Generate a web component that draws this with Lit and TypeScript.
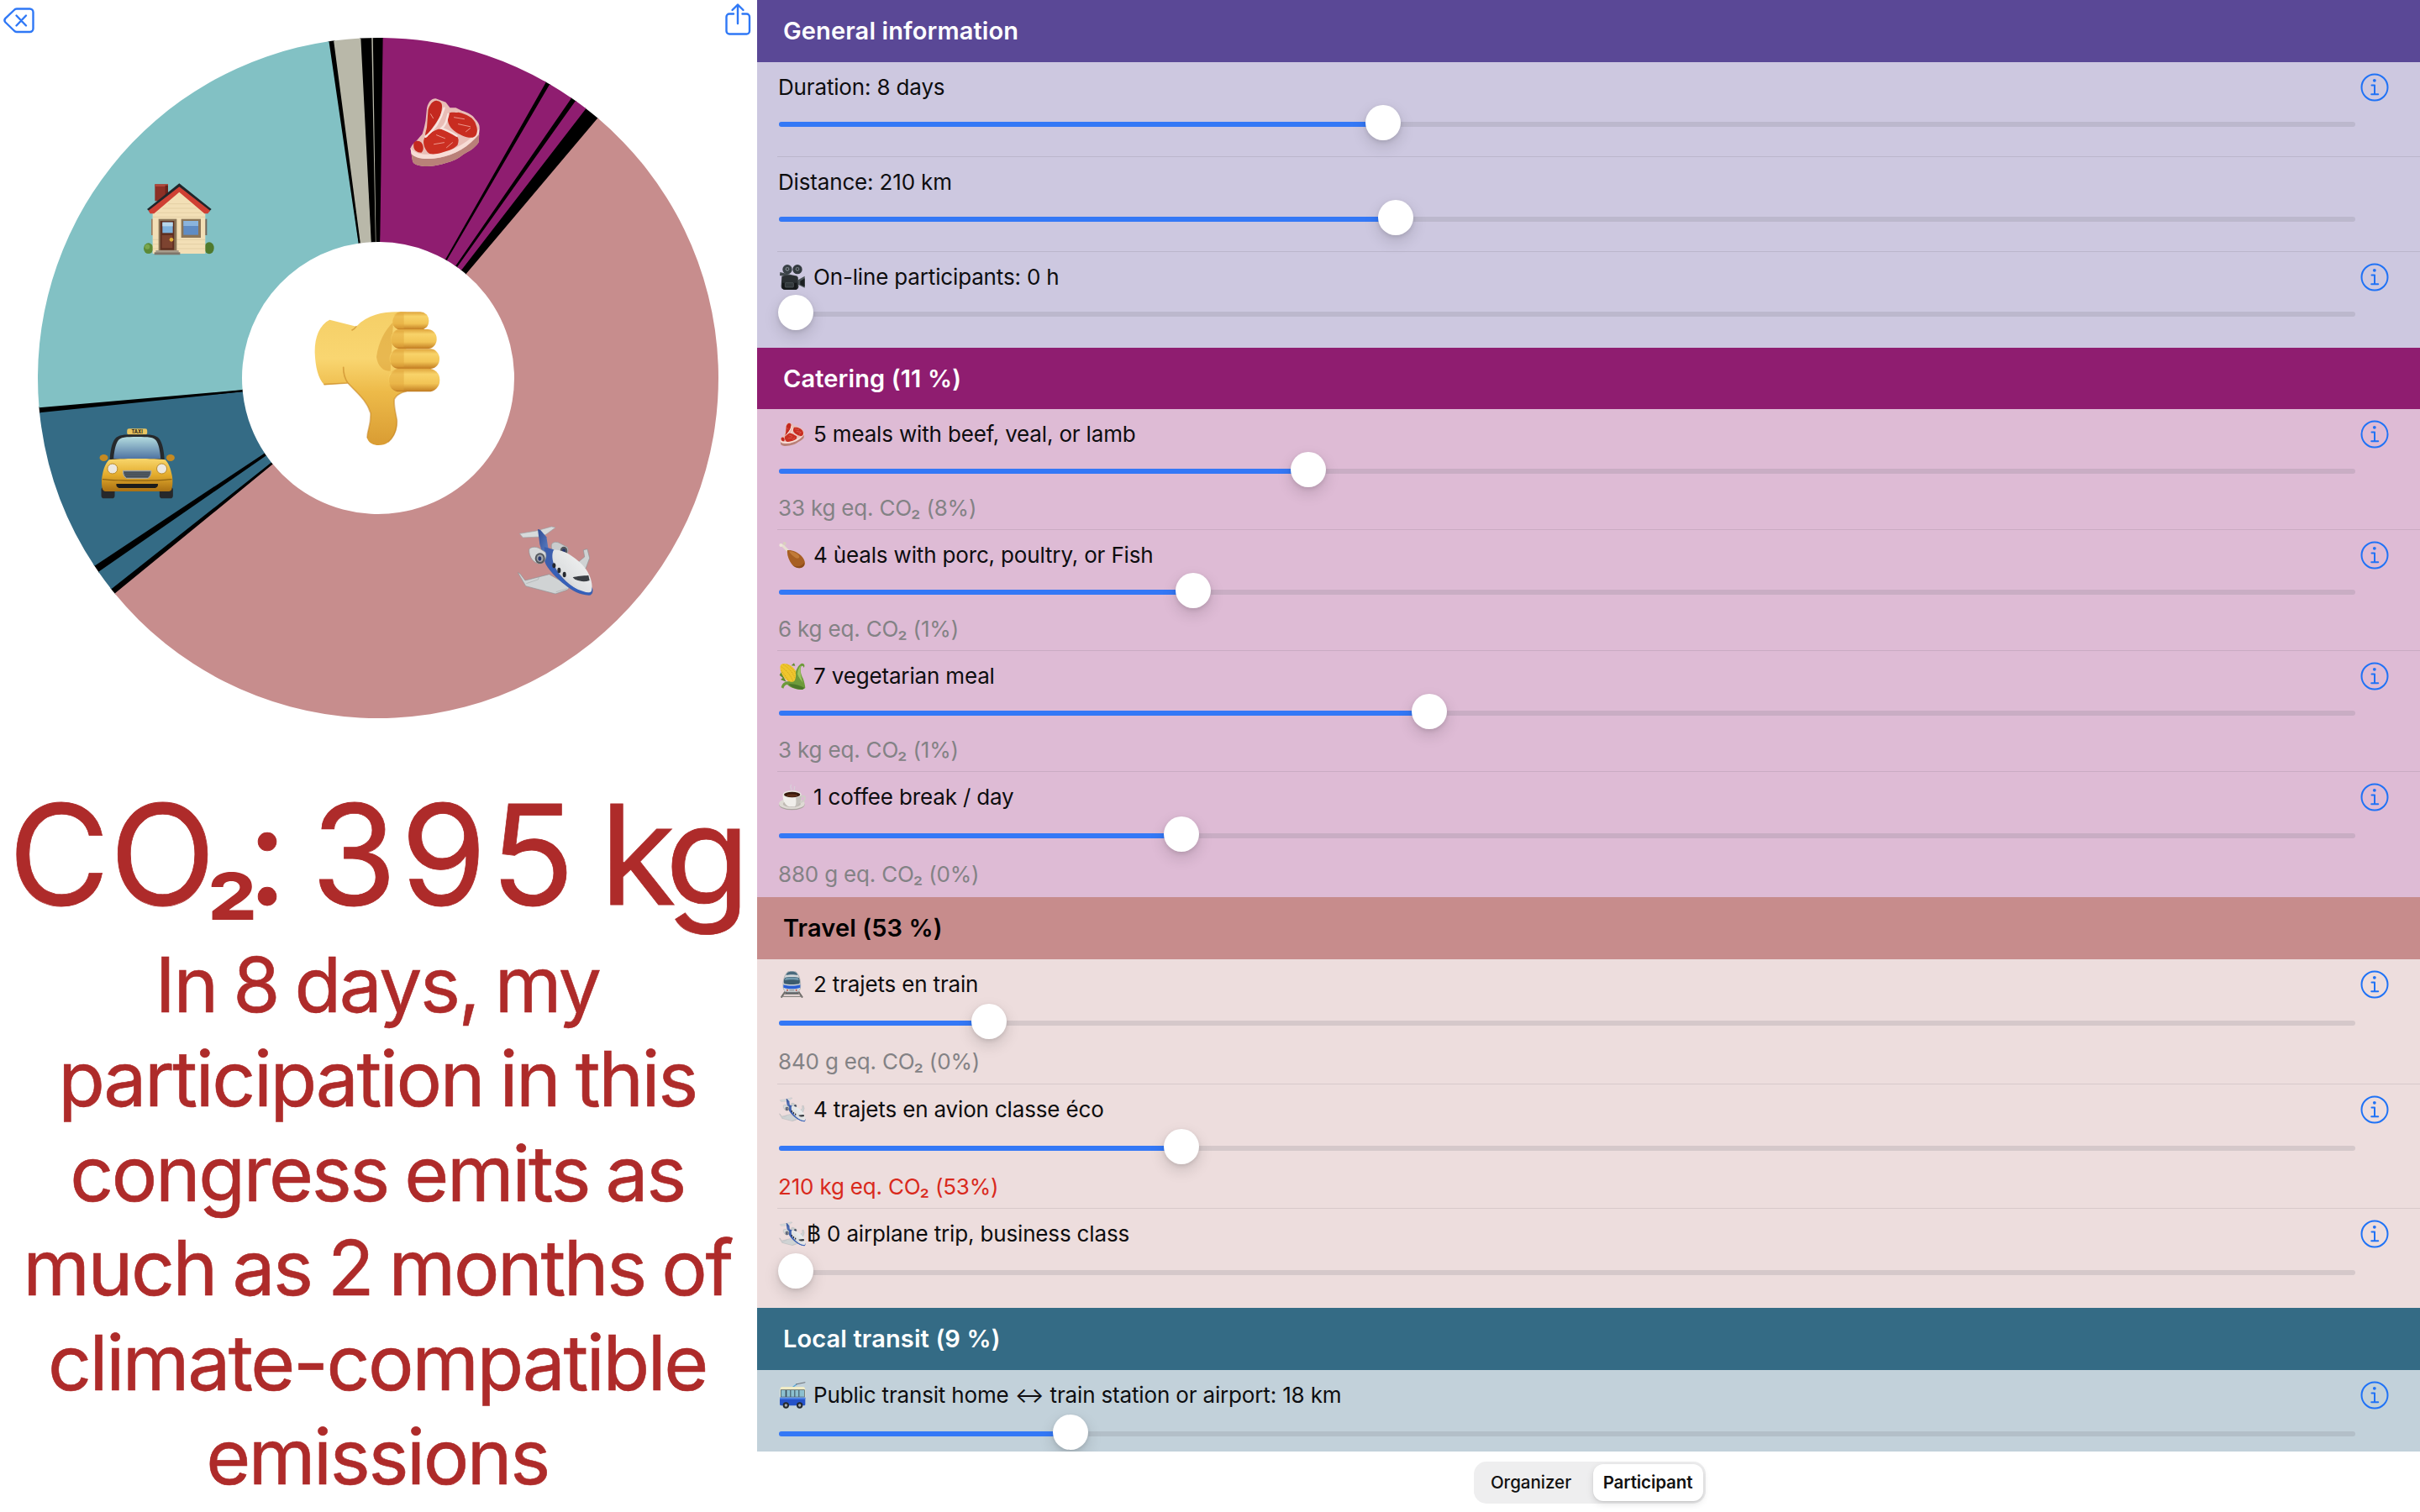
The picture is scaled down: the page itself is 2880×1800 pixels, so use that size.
import { LitElement, html, svg, css, nothing, type SVGTemplateResult } from "lit";
import { customElement, property } from "lit/decorators.js";
import { classMap } from "lit/directives/class-map.js";
import { styleMap } from "lit/directives/style-map.js";

/* ---------- Pictograms. Each one is drawn in its own coordinate box. ---------- */

const steak = svg`
  <path fill="#e9bdb6" d="M30 .6 42 5l5 6.600h7l7 3.400c7 2 13 5 16 10 4 4 6 8 5 12l-1 16c-5 7-11 10-18 14-7 6-13 8-20 10-9 3-19 5-29 4-7-1-11-3-11.500-6L0 60c1-3 3-6 6-8 3-3 5-6 8-9 2-6 3-11 4-16l1.500-15C21 5 25 .5 30 .6Z"/>
  <path fill="#b98078" d="M1 66c6 6 20 8 34 5 20-5 34-13 47-28l-1 10c-5 7-11 10-18 14-7 6-13 8-20 10-9 3-19 5-29 4-7-1-11-3-11.500-6Z"/>
  <path fill="#f7dcd6" d="M0 59c4 7 16 10 32 7 21-4 39-14 50-30l-.5 6C70 58 52 68 34 71 18 74 5 72 1 66Z"/>
  <path fill="#c4291f" d="M31 3c5 1 7 3 6.500 8-.5 9-4 14-8 20l-11 15c-2-2 0-6 1-11L21 14c2-6 5-11 10-11Z"/>
  <path fill="#c82c20" d="M46 18c3-2 7 0 11-1 9 2 19 6 21 15 3 7 1 14-4 15-7 1-15-3-22-8-6-5-10-12-6-21Z"/>
  <path fill="#cb2f22" d="M17 47c4-4 10-8 16-10 8 0 13 2 18 6 7 3 7 7 5 13-6 6-13 7-19 9-7 2-14 3-17-1-4-5-6-12-3-17Z"/>
  <path fill="#c4291f" d="M4 53c3-3 7-2 9 0 3 4 3 9 0 12-5 0-11-3-9-12Z"/>
  <path fill="none" stroke="#f9e4df" stroke-width="2.400" stroke-linecap="round" d="M40 12C36 26 30 37 18 46M45 19c-2 8-3 13-8 17 8 3 13 6 18 9"/>
  <path fill="none" stroke="#f0a59a" stroke-width=".9" stroke-linecap="round" d="M24 19l3 5M52 23l12 2M57 31l14 3M66 40l5-4M31 44l10 4M28 55l12-2M43 59l7-6"/>`;

const house = svg`
  <ellipse cx="80" cy="287" rx="17" ry="19" fill="#5c8a36"/><ellipse cx="297" cy="286" rx="17" ry="21" fill="#4f7a2d"/>
  <ellipse cx="76" cy="281" rx="9" ry="9" fill="#79a64d"/>
  <path fill="#9c7a5c" d="M90 182h7v58h-7z"/><path fill="#6f665a" d="M281 182h8v58h-8z"/>
  <path fill="#8c3026" d="M103 58h47v60h-47z"/><path fill="#b0483b" d="M103 58h47v8h-47z"/><path fill="#6b231c" d="M140 62h10v45h-10z"/>
  <path fill="#f2dfb6" d="M95 160 190 85l93 75v146H95z"/>
  <path fill="none" stroke="#dcc79d" stroke-width="2" d="M150 128h82M130 144h122M110 160h160M96 175h186M96 256h186M96 272h186M96 288h186"/>
  <path fill="#20262b" d="M75 147 190 55l115 92-8 8L190 78 84 155z"/>
  <path fill="#cf4034" d="M80 152 190 67l110 85-8 11h-12L190 86l-90 77H86z"/>
  <path fill="#8a7558" d="M116 182h65v114h-65z"/><path fill="#5f2f20" d="M122 189h50v104h-50z"/><path fill="#7d4330" d="M128 240h38v46h-38z"/>
  <path fill="#7fb2dd" d="M130 194h37v38h-37z"/><path fill="#b7d6ea" d="M130 194h37v14h-37z"/><circle cx="162" cy="256" r="7" fill="#e2b13c"/>
  <path fill="#8b7557" d="M197 182h70v67h-70z"/><path fill="#5f8cc4" d="M205 189h53v50h-53z"/><path fill="#8ab4dd" d="M205 189h53v18h-53z"/>
  <path fill="#a79c8c" d="M106 294h82v8h-82z"/><path fill="#7f766b" d="M101 301h92v9h-92z"/>`;

const taxi = svg`
  <rect x="-128" y="210" width="48" height="40" rx="10" fill="#26282b"/><rect x="80" y="210" width="48" height="40" rx="10" fill="#26282b"/>
  <rect x="-36" y="1" width="72" height="22" rx="7" fill="#e9c560"/>
  <text x="0" y="18" text-anchor="middle" font-family="Inter, sans-serif" font-size="17" font-weight="700" fill="#2c2616">TAXI</text>
  <path fill="#26292c" d="M-98 116C-96 80-90 50-78 36-64 20-30 22 0 22s64-2 78 14c12 14 18 44 20 80z"/>
  <path fill="url(#glass)" d="M-84 108c2-28 7-50 15-63 8-14 30-15 69-15s61 1 69 15c8 13 13 35 15 63z"/>
  <ellipse cx="-119" cy="105" rx="15" ry="12" fill="#c58a22"/><ellipse cx="119" cy="105" rx="15" ry="12" fill="#c58a22"/>
  <path fill="url(#cab)" d="M-100 112c30-5 170-5 200 0 14 14 20 34 24 54 4 18 3 40-1 52-3 6-8 7-16 7h-214c-8 0-13-1-16-7-4-12-5-34-1-52 4-20 10-40 24-54z"/>
  <path fill="#8f6412" d="M-124 180c60 6 188 6 248 0v4c-60 6-188 6-248 0z"/>
  <ellipse cx="-88" cy="144" rx="18" ry="18" fill="#ece8e0" stroke="#b98a2c" stroke-width="3"/><ellipse cx="88" cy="144" rx="18" ry="18" fill="#ece8e0" stroke="#b98a2c" stroke-width="3"/>
  <path fill="#5b6670" stroke="#a9aeb0" stroke-width="3" d="M-50 151H50c2 12-4 24-12 27h-76c-8-3-14-15-12-27z"/>
  <path stroke="#2f373d" stroke-width="2.500" d="M-46 159h92M-44 166h88M-40 173h80"/>
  <path fill="#1c1c1b" d="M-74 198H74c2 8-4 15-12 15H-62c-8 0-14-7-12-15z"/>`;

const plane = svg`
  <path fill="#d7dadb" stroke="#9fa3a6" stroke-width="2" d="M58 76 118 66l54-15 14 3-34 25-18 8-64 3z"/>
  <path fill="url(#tail)" d="M123 60 132 62l22 26 8 50-20 16-12-40z"/>
  <path fill="#c9cccd" stroke="#94989b" stroke-width="2" d="M172 116c4-12 18-12 30-6l26 14c8 12 2 26-12 28l-32-8c-8-6-14-18-12-28z"/>
  <ellipse cx="216" cy="137" rx="13" ry="15" fill="#53575c"/><ellipse cx="216" cy="137" rx="6" ry="7" fill="#27376d"/>
  <path fill="#cfd2d3" stroke="#8d9194" stroke-width="2" d="m286 134 14-3 8 32-14 38-36-16 32-26z"/>
  <path fill="#d0d3d4" stroke="#8f9396" stroke-width="2" d="m52 215 8 4 18 24 86-22 76 44-12 12-42 14-106-28z"/>
  <path fill="none" stroke="#a9adaf" stroke-width="2" d="m82 254 42-14 4-10M188 284l40-12"/>
  <path fill="#3c5fae" d="M146 124c28 4 60 20 84 40l88 106c4 14 0 25-12 26-34-2-60-16-84-36-34-26-66-60-74-84z"/>
  <path fill="url(#hull)" d="M180 134c20-2 50 10 70 26 22 16 44 36 56 62 10 22 14 44 8 60-6 8-22 6-36 0-34-14-78-54-94-88-10-24-12-46-4-60z"/>
  <path fill="none" stroke="#3460bb" stroke-width="7" d="M166 190c26 44 82 96 146 101"/>
  <path fill="#3b3f44" d="M248 232c14-4 38-6 56-7l4 18c-16 6-34 4-48-2-6-2-10-6-12-9z"/>
  <ellipse cx="181" cy="190" rx="6" ry="9" fill="#25282d"/><ellipse cx="199" cy="207" rx="6" ry="10" fill="#25282d"/><ellipse cx="218" cy="222" rx="6" ry="10" fill="#25282d"/>
  <path fill="#d6d8d9" stroke="#8d9194" stroke-width="2" d="M92 132c6-10 24-10 36-4l22 14c8 18-2 38-20 42-22-2-40-26-38-52z"/>
  <ellipse cx="131" cy="164" rx="18" ry="19" fill="#54585d"/><ellipse cx="131" cy="164" rx="12" ry="13" fill="#a0a5ab"/><ellipse cx="130" cy="165" rx="6" ry="8" fill="#27376d"/>`;

const thumbDown = svg`
  <path fill="url(#skin)" d="M157 122C120 140 103 185 104 240c2 50 11 90 34 115l84-6c28 31 68 61 81 106 2 45-12 60-12 90 9 30 54 30 74 15 25-20 35-50 32-80-5-30-12-50-9-75 7-15 27-23 42-27l0-283c-60-4-128-1-178 51z"/>
  <path fill="none" stroke="#c98a2b" stroke-width="5" stroke-linecap="round" opacity=".65" d="M206 292c0 24 6 42 16 56M252 146c-4 6-9 10-15 13M138 353l84-5"/>
  <path fill="none" stroke="#c27f22" stroke-width="5" stroke-linecap="round" opacity=".5" d="M224 350c28 31 66 60 79 105 2 45-12 60-12 88M430 378c-20 4-34 12-42 27-3 25 5 50 9 75 1 30-8 58-30 78"/>
  <path fill="#dba037" opacity=".55" d="M384 130c-30 30-52 70-60 125 6 34 22 50 50 50z"/>
  <rect x="381" y="94" width="130" height="64" rx="30" fill="url(#finger)"/>
  <rect x="376" y="156" width="163" height="70" rx="33" fill="url(#finger)"/>
  <rect x="371" y="226" width="178" height="71" rx="34" fill="url(#finger)"/>
  <rect x="367" y="296" width="183" height="83" rx="40" fill="url(#finger)"/>
  <path fill="#dfa43a" opacity=".45" d="M400 100c-22 8-24 46-2 54h24v-54zM396 162c-24 8-26 48 0 58h26v-58zM392 232c-24 8-26 48 0 58h30v-58zM392 304c-30 10-30 56 0 70h30v-70z"/>`;

const camera = svg`
  <circle cx="30" cy="20" r="17" fill="#3a4247"/><circle cx="66" cy="20" r="17" fill="#333a3f"/>
  <circle cx="30" cy="19" r="7" fill="#788086"/><circle cx="66" cy="19" r="7" fill="#6d757b"/><circle cx="30" cy="19" r="3" fill="#22272a"/><circle cx="66" cy="19" r="3" fill="#22272a"/>
  <path fill="#41484c" d="M4 30 66 44l-2 8L3 42z"/><path fill="#2a2f32" d="M10 46c8-6 52-6 58 2l2 34c0 8-6 10-14 10H22c-10 0-14-4-14-12z"/>
  <path fill="#15181a" d="M12 68h52v24H20c-6 0-8-4-8-8z"/><rect x="22" y="68" width="30" height="16" rx="2" fill="#33393c" stroke="#596166" stroke-width="2"/>
  <path fill="#4b5357" d="M68 58 92 44v42L68 74z"/><path fill="#1b1f21" d="M76 62 92 52v30l-16-8z"/>`;

const drumstick = svg`
  <path fill="none" stroke="#e8dfd0" stroke-width="9" stroke-linecap="round" d="m14 14 22 22"/>
  <circle cx="7" cy="12" r="6" fill="#eee7da"/><circle cx="20" cy="6" r="6" fill="#d9cfbf"/>
  <path fill="#a75f23" d="M30 30c16-2 36 6 50 20 14 14 16 30 8 38-10 10-32 6-42-8C36 66 28 48 30 30Z"/>
  <path fill="#c98340" opacity=".75" d="M36 34c14 0 28 6 36 16 4 8-6 12-14 6-10-6-18-14-22-22Z"/><path fill="#7c3f13" opacity=".6" d="M50 84c14 8 32 4 40-10 2 6 0 12-4 15-10 8-26 6-36-5Z"/>`;

const corn = svg`
  <path fill="#5f8a2c" d="M8 34 2 44l12 10-8 6 20 8zM44 10 54 1l4 10z"/>
  <path fill="#efc62d" d="M8 6C22-2 46 8 58 26c12 16 18 36 10 46-16 6-38-2-50-20C6 36 0 16 8 6Z"/>
  <path stroke="#bd8c13" stroke-width="1.800" stroke-dasharray="4 3" fill="none" d="M14 6c22 12 40 32 48 62M8 14c18 12 36 32 44 56M28 6c18 10 34 30 40 52M8 28c8 10 20 26 30 40"/>
  <path fill="#6d9a3a" d="M60 32c4-14 12-26 22-30 10 0 12 10 6 16 0-6-4-8-8-6-6 10-2 30 6 44 4 10 8 26 8 34l-10 6C64 96 42 90 30 78c-6 0-12 6-14 14l-8-4c4-16 16-24 34-20 16 4 20-12 18-36Z"/>
  <path fill="#9cc35f" d="M66 40c2-14 6-24 12-30-4 18 0 40 8 62-6-8-16-18-20-32Z"/><path fill="#3f6a22" opacity=".7" d="M34 76c16-2 40 4 58 14l-8 6c-20 0-38-6-50-20Z"/>`;

const coffee = svg`
  <path fill="none" stroke="#d8d2da" stroke-width="4" stroke-linecap="round" opacity=".8" d="M44 26c8-8-10-10 0-22M54 22c4-6 0-8 2-12"/>
  <ellipse cx="46" cy="74" rx="46" ry="20" fill="#a9a59e"/><ellipse cx="46" cy="71" rx="46" ry="19" fill="#dedad4"/>
  <ellipse cx="46" cy="72" rx="32" ry="12" fill="#bfbab3"/>
  <path fill="none" stroke="#d0cdc7" stroke-width="6" d="M76 46c18-6 22 4 14 12-4 6-12 8-20 8"/>
  <path fill="#f0eeea" d="M14 38h66c2 20-8 40-24 44H38C22 78 12 58 14 38Z"/><path fill="#bcb8b1" opacity=".8" d="M58 40h22c2 20-8 40-24 44 8-10 6-30 2-44Z"/>
  <ellipse cx="47" cy="38" rx="33" ry="13" fill="#e9e6e1"/><ellipse cx="47" cy="39" rx="29" ry="10" fill="#36180c"/><ellipse cx="47" cy="42" rx="20" ry="5" fill="#5d301a"/>`;

const train = svg`
  <path fill="none" stroke="#6d6a67" stroke-width="6" d="M20 74 6 95M68 74l14 21"/><path fill="none" stroke="#8b8783" stroke-width="4" d="M14 82h60M8 91h72"/>
  <path fill="#5f6468" d="M24 70h40l4 12H20z"/>
  <path fill="#d3d7da" stroke="#9ba1a5" stroke-width="2" d="M28 4c8-6 24-6 32 0 12 12 16 34 15 52 0 10-5 17-14 19H27c-9-2-14-9-14-19C12 38 16 16 28 4Z"/>
  <path fill="#49697c" d="M27 7c8-7 26-7 34 0l4 8c-12-3-30-3-42 0z"/>
  <path fill="#3d5c6e" d="M19 24c12-4 38-4 50 0 4 8 5 16 2 21-14 4-40 4-54 0-3-5-2-13 2-21Z"/>
  <path fill="#7199ad" d="M21 25c12-3 34-3 46 0l2 8c-14-3-36-3-50 0z"/>
  <path fill="#2b5fd3" d="M14 49c18 5 42 5 60 0v10c-18 6-42 6-60 0z"/>
  <circle cx="28" cy="68" r="3" fill="#b7463c"/><circle cx="60" cy="68" r="3" fill="#b7463c"/><path fill="#a4a8ab" d="M35 66h18v5H35z"/>`;

const trolley = svg`
  <path fill="none" stroke="#53a6d8" stroke-width="4" d="m48 20 16-12"/><path fill="none" stroke="#6b7177" stroke-width="3" d="M60 9 94 2"/>
  <path fill="#f1ecc6" d="M10 18h76c6 0 8 6 8 12v26H4V30c0-8 2-10 6-12Z"/>
  <path fill="#3b4d5a" d="M6 28h86v27H6z"/><path fill="#8cc0cf" d="M8 30h15v23H8zM28 30h12v23H28zM43 30h12v23H43zM58 30h12v23H58zM73 30h17v23H73z"/>
  <path fill="#2552c8" d="M3 56h91v24c0 4-2 5-6 5H8c-4 0-5-2-5-6z"/><path fill="#4f86e8" d="M3 56h91v6H3z"/>
  <circle cx="25" cy="84" r="11" fill="#24282c"/><circle cx="74" cy="84" r="11" fill="#24282c"/><circle cx="25" cy="84" r="5" fill="#a6abb0"/><circle cx="74" cy="84" r="5" fill="#a6abb0"/>`;

type Pictogram = { box: string; art: SVGTemplateResult };
const pictograms: Record<string, Pictogram> = {
  steak: { box: "-4 -5 92 92", art: steak },
  plane: { box: "48 38 276 270", art: plane },
  camera: { box: "0 0 96 96", art: camera },
  drumstick: { box: "0 0 96 96", art: drumstick },
  corn: { box: "0 0 96 96", art: corn },
  coffee: { box: "0 0 96 96", art: coffee },
  train: { box: "-2 0 96 96", art: train },
  trolley: { box: "0 0 96 96", art: trolley },
};

const gradients = svg`<defs>
  <linearGradient id="skin" x1="0" y1="0" x2="0" y2="1"><stop offset="0" stop-color="#f5cf67"/><stop offset=".35" stop-color="#f9d671"/><stop offset=".6" stop-color="#edba49"/><stop offset="1" stop-color="#d99c33"/></linearGradient>
  <linearGradient id="finger" x1="0" y1="0" x2="0" y2="1"><stop offset="0" stop-color="#dfa43c"/><stop offset=".25" stop-color="#f8d369"/><stop offset=".65" stop-color="#f2c455"/><stop offset="1" stop-color="#c07a20"/></linearGradient>
  <linearGradient id="glass" x1="0" y1="0" x2="0" y2="1"><stop offset="0" stop-color="#b4dcdf"/><stop offset="1" stop-color="#4f74a2"/></linearGradient>
  <linearGradient id="cab" x1="0" y1="0" x2="0" y2="1"><stop offset="0" stop-color="#f8d66b"/><stop offset=".5" stop-color="#e3ab2c"/><stop offset="1" stop-color="#a97013"/></linearGradient>
  <linearGradient id="tail" x1="0" y1="0" x2="1" y2="1"><stop offset="0" stop-color="#2f4b94"/><stop offset="1" stop-color="#5f84c8"/></linearGradient>
  <linearGradient id="hull" x1="1" y1="0" x2="0" y2="1"><stop offset="0" stop-color="#f6f7f7"/><stop offset=".6" stop-color="#dfe1e2"/><stop offset="1" stop-color="#a9adb1"/></linearGradient>
</defs>`;

/* ---------- Data ---------- */

type Item = { icon?: string; label: string; thumb: number; note?: string; hot?: boolean; info: boolean; height: number; tall?: boolean };
type Section = { key: string; title: string; headHeight: number; items: Item[] };

const sections: Section[] = [
  { key: "general", title: "General information", headHeight: 74, items: [
    { label: "Duration: 8 days", thumb: 720, info: true, height: 113 },
    { label: "Distance: 210 km", thumb: 735.5, info: false, height: 113 },
    { icon: "camera", label: "On-line participants: 0 h", thumb: 21, info: true, height: 114 },
  ] },
  { key: "catering", title: "Catering (11 %)", headHeight: 73, items: [
    { icon: "steak", label: "5 meals with beef, veal, or lamb", thumb: 631, note: "33 kg eq. CO₂ (8%)", info: true, height: 144 },
    { icon: "drumstick", label: "4 ùeals with porc, poultry, or Fish", thumb: 494, note: "6 kg eq. CO₂ (1%)", info: true, height: 144 },
    { icon: "corn", label: "7 vegetarian meal", thumb: 775.5, note: "3 kg eq. CO₂ (1%)", info: true, height: 144 },
    { icon: "coffee", label: "1 coffee break / day", thumb: 480, note: "880 g eq. CO₂ (0%)", info: true, height: 149, tall: true },
  ] },
  { key: "travel", title: "Travel (53 %)", headHeight: 74, items: [
    { icon: "train", label: "2 trajets en train", thumb: 251, note: "840 g eq. CO₂ (0%)", info: true, height: 149, tall: true },
    { icon: "plane", label: "4 trajets en avion classe éco", thumb: 480, note: "210 kg eq. CO₂ (53%)", hot: true, info: true, height: 148, tall: true },
    { icon: "plane", label: "฿ 0 airplane trip, business class", thumb: 21, info: true, height: 118, tall: true },
  ] },
  { key: "transit", title: "Local transit (9 %)", headHeight: 74, items: [
    { icon: "trolley", label: "Public transit home ↔ train station or airport: 18 km", thumb: 348, info: true, height: 149, tall: true },
  ] },
];

/** Slices in degrees, clockwise from the top of the ring. */
const slices: [number, number, string][] = [
  [29.2, 30.6, "#000"], [34.4, 35.7, "#000"], [37.4, 40.4, "#000"], [230.5, 231.9, "#000"],
  [235, 236.7, "#000"], [264, 265.2, "#000"], [351.5, 352.7, "#000"], [356.9, 361, "#000"],
  [0.8, 29.57, "#8f1d70"], [30.28, 34.62, "#8f1d70"], [35.46, 37.65, "#8f1d70"],
  [40.19, 230.7, "#c78d8d"], [231.64, 235.26, "#346b85"], [236.46, 264.17, "#346b85"],
  [265, 351.69, "#82c1c4"], [352.5, 357.08, "#b9b8a9"], [358.9, 359.12, "#b9b8a9"],
];

function ringSlice(from: number, to: number, outer = 405, inner = 162): string {
  const at = (deg: number, r: number) => {
    const a = (deg * Math.PI) / 180;
    return `${(450 + r * Math.sin(a)).toFixed(2)} ${(450 - r * Math.cos(a)).toFixed(2)}`;
  };
  const large = to - from > 180 ? 1 : 0;
  return `M${at(from, outer)}A${outer} ${outer} 0 ${large} 1 ${at(to, outer)}L${at(to, inner)}A${inner} ${inner} 0 ${large} 0 ${at(from, inner)}Z`;
}

/* ---------- Elements ---------- */

@customElement("emission-slider")
export class EmissionSlider extends LitElement {
  @property({ type: Number }) thumb = 21;
  static styles = css`
    :host { display: flex; align-items: center; position: relative; height: 42px; margin-left: 2px; }
    .track { flex: 1; height: 6px; margin-top: 4px; border-radius: 3px; background: rgba(120, 120, 128, 0.2); overflow: hidden; }
    .fill { height: 100%; background: #3478f6; }
    .knob { position: absolute; top: 0; width: 42px; height: 42px; border-radius: 50%; background: #fff;
      box-shadow: 0 7px 18px rgba(0, 0, 0, 0.14), 0 2px 5px rgba(0, 0, 0, 0.1); }
  `;
  render() {
    const fill = this.thumb > 21 ? this.thumb - 2 : 0;
    return html`<div class="track"><div class="fill" style=${styleMap({ width: `${fill}px` })}></div></div>
      <div class="knob" style=${styleMap({ left: `${this.thumb - 22.5}px` })}></div>`;
  }
}

@customElement("emission-row")
export class EmissionRow extends LitElement {
  @property({ attribute: false }) item!: Item;
  static styles = css`
    :host { display: block; }
    .row { display: grid; grid-template-columns: 1878px 1fr; margin-left: 24px; box-sizing: border-box; }
    .row.ruled { border-bottom: 1px solid rgba(60, 60, 67, 0.12); }
    .label { display: flex; align-items: center; height: 43px; padding: 8px 0 0 1px; font-size: 26px; line-height: 43px;
      letter-spacing: -0.16px; color: #0d0d0f; white-space: pre; }
    .tall .label { padding-bottom: 2px; }
    .icon { width: 32px; height: 32px; margin: 0 9px 0 1px; flex: none; }
    .icon.tight { margin-right: 1px; }
    .note { height: 49px; line-height: 49px; padding-left: 1px; font-size: 26px; letter-spacing: -0.18px; color: #838285; }
    .tall .note { line-height: 53px; }
    .note.hot { color: #d9291c; }
    .info { margin: 13px 0 0 6px; width: 34px; height: 34px; }
  `;
  render() {
    const it = this.item;
    const pic = it.icon ? pictograms[it.icon] : undefined;
    return html`<div class=${classMap({ row: true, tall: !!it.tall, ruled: this.hasAttribute("ruled") })} style=${styleMap({ height: `${it.height}px` })}>
      <div>
        <div class="label">${pic ? html`<svg class=${classMap({ icon: true, tight: it.label.startsWith("฿") })} viewBox=${pic.box}>${gradients}${pic.art}</svg>` : nothing}<span>${it.label}</span></div>
        <emission-slider .thumb=${it.thumb}></emission-slider>
        ${it.note ? html`<div class=${classMap({ note: true, hot: !!it.hot })}>${it.note}</div>` : nothing}
      </div>
      ${it.info ? html`<svg class="info" viewBox="0 0 34 34" fill="none" stroke="#1f72f6" stroke-width="2">
        <circle cx="17" cy="17" r="15.500"></circle><circle cx="16.800" cy="8.800" r="1.900" fill="#1f72f6" stroke="none"></circle>
        <path d="M13.500 14.500H17V25.200M13.200 25.200H21.200" stroke-linecap="round" stroke-linejoin="round"></path></svg>` : nothing}
    </div>`;
  }
}

@customElement("app-root")
export class AppRoot extends LitElement {
  static styles = css`
    :host { display: grid; grid-template-columns: 901px 1fr; width: 2880px; height: 1800px; overflow: hidden;
      background: #fff; font-family: Inter, "Liberation Sans", sans-serif; }
    .summary { display: flex; flex-direction: column; position: relative; color: #ae2b2a; text-align: center; }
    .ring { display: block; width: 900px; height: 900px; }
    .tool { position: absolute; top: 0; fill: none; stroke: #2f78f6; stroke-width: 2.4; stroke-linecap: round; stroke-linejoin: round; }
    .clear { left: 0; }
    .share { right: 0; }
    .total { display: flex; align-items: baseline; margin: 42px 0 0 10px; height: 150px; font-size: 165px; line-height: 150px;
      font-weight: 400; text-align: left; white-space: pre; word-spacing: -16px; -webkit-text-stroke: 0.8px currentColor; }
    .o { letter-spacing: -12px; }
    .sub { font-size: 140px; font-weight: 600; letter-spacing: -14px; position: relative; top: -3px; -webkit-text-stroke: 0; }
    .colon { letter-spacing: -1px; }
    .digits { letter-spacing: 4.6px; }
    .gap { letter-spacing: -5px; }
    .k { letter-spacing: -13px; }
    .verdict { margin: 24px 3px 0 0; font-size: 91px; line-height: 112.4px; letter-spacing: -2.4px; word-spacing: -3.8px;
      -webkit-text-stroke: 0.6px currentColor; }
    .panel { display: flex; flex-direction: column; min-width: 0; height: 1800px; }
    .list { height: 1728px; overflow: hidden; }
    .head { padding-left: 31px; font-size: 29px; font-weight: 600; line-height: 74px; letter-spacing: 0.12px; color: #fff; }
    .general .head { background: #5a4896; }
    .general { background: #cdc8e0; }
    .catering .head { background: #8f1d70; }
    .catering { background: #debbd5; }
    .travel .head { background: #c78c8c; color: #000; }
    .travel { background: #eddddd; }
    .transit .head { background: #346b85; }
    .transit { background: #c2d1da; }
    .bar { display: flex; justify-content: center; padding: 12px 0 0 2px; }
    .segments { display: flex; box-sizing: border-box; width: 276px; height: 50px; padding: 3px; border-radius: 15px; background: #eeeeef; }
    .segment { flex: 1; padding-right: 8px; line-height: 43px; text-align: center; font-size: 20.5px; font-weight: 500; color: #111; }
    .segment.on { flex: none; width: 131px; padding-right: 0; font-weight: 600; letter-spacing: -0.1px; border-radius: 12px; background: #fff; box-shadow: 0 3px 8px rgba(0, 0, 0, 0.12), 0 1px 2px rgba(0, 0, 0, 0.08); }
  `;

  private chart() {
    return html`<svg class="ring" viewBox="0 0 900 900">
      ${gradients}
      ${slices.map(([a, b, c]) => svg`<path d=${ringSlice(a, b)} fill=${c}></path>`)}
      <g transform="translate(488.500 116.700)">${steak}</g>
      <g transform="translate(150 200) scale(.3333)">${house}</g>
      <g transform="translate(163.200 510) scale(.3333)">${taxi}</g>
      <g transform="translate(599 610) scale(.3333)">${plane}</g>
      <g transform="translate(340 340) scale(.3333)">${thumbDown}</g>
    </svg>`;
  }

  render() {
    return html`
      <div class="summary">
        ${this.chart()}
        <svg class="tool clear" width="46" height="46" viewBox="0 0 46 46"><path d="M20 10.500H35.500a4 4 0 0 1 4 4V34a4 4 0 0 1-4 4H20a4 4 0 0 1-3.200-1.500L6.400 26.500a3.500 3.500 0 0 1 0-4.600L16.800 12A4 4 0 0 1 20 10.500ZM19.500 18.500l11.500 12M31 18.500l-11.500 12"></path></svg>
        <svg class="tool share" width="46" height="46" viewBox="855 0 46 46"><path d="M873 16.500h-5a3.500 3.500 0 0 0-3.500 3.500v17a3.500 3.500 0 0 0 3.500 3.500h20.500a3.500 3.500 0 0 0 3.500-3.500V20a3.500 3.500 0 0 0-3.500-3.500h-5M878 28V6M871.500 12l6.500-6.500 6.500 6.500"></path></svg>
        <h1 class="total"><span>C</span><span class="o">O</span><span class="sub">₂</span><span class="colon">: </span><span class="digits">395</span><span class="gap"> </span><span class="k">k</span><span>g</span></h1>
        <p class="verdict">In 8 days, my<br>participation in this<br>congress emits as<br>much as 2 months of<br>climate-compatible<br>emissions</p>
      </div>
      <div class="panel">
        <div class="list">
          ${sections.map((s) => html`<section class=${s.key}>
            <div class="head" style=${styleMap({ height: `${s.headHeight}px` })}>${s.title}</div>
            ${s.items.map((it, i) => html`<emission-row .item=${it} ?ruled=${i < s.items.length - 1}></emission-row>`)}
          </section>`)}
        </div>
        <div class="bar"><div class="segments"><div class="segment">Organizer</div><div class="segment on">Participant</div></div></div>
      </div>`;
  }
}
